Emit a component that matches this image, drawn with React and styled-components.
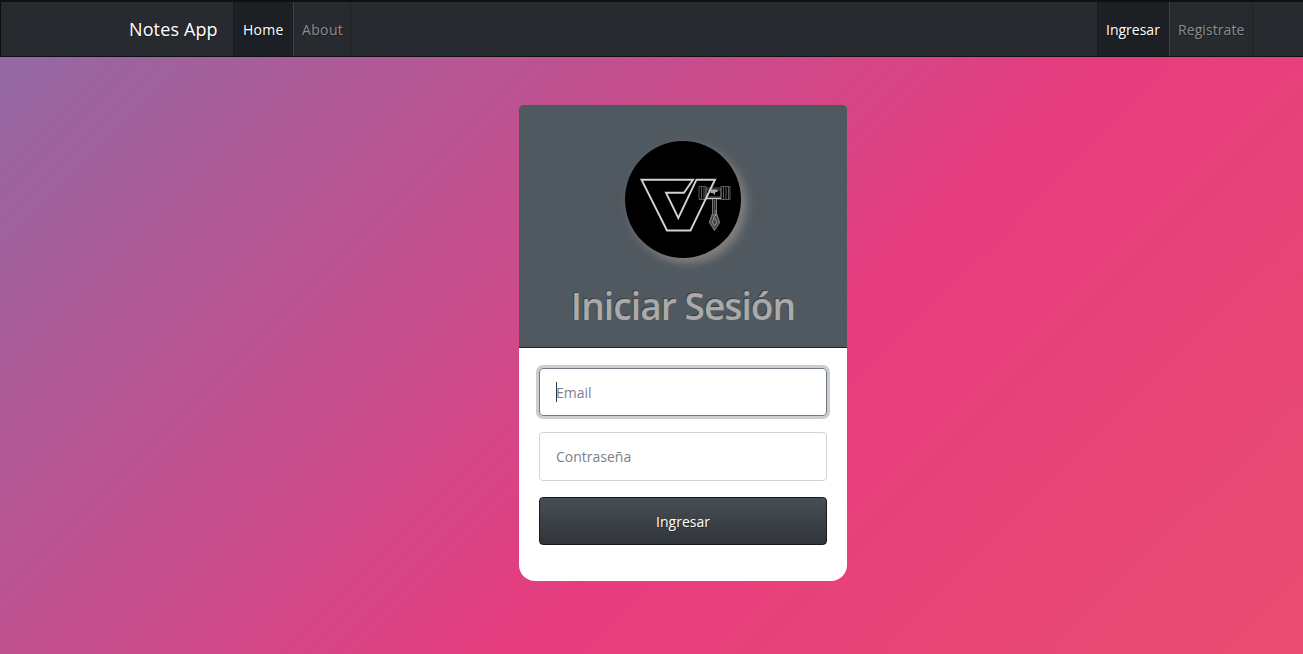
import React from "react";
import styled, { createGlobalStyle } from "styled-components";

const GlobalStyle = createGlobalStyle`
  *, *::before, *::after { box-sizing: border-box; }
  body { margin: 0; font-family: "Open Sans", "Noto Sans", sans-serif; font-size: 14px; line-height: 22px; }
`;

const Page = styled.div`
  height: 100vh;
  overflow: hidden;
  background: linear-gradient(135deg, #8f6ba5 0%, #e73c7e 59.9%, #e94e71 100%);
`;

const Navbar = styled.nav`
  display: flex;
  height: 57px;
  padding: 0 50px 0 128px;
  background: #272b2f;
  border: 1px solid #0f1012;
  border-top-width: 2px;
  border-right: 0;
  text-shadow: 1px 1px 1px rgba(0, 0, 0, 0.3);
`;

const Brand = styled.a`
  width: 104px;
  color: #fff;
  font-size: 18px;
  line-height: 54px;
  letter-spacing: 0.12px;
  white-space: nowrap;
`;

const NavGroup = styled.div`
  display: flex;
  margin-left: ${(p) => (p.$end ? "auto" : "0")};
`;

const NavLink = styled.a`
  width: ${(p) => p.$width}px;
  height: 54px;
  padding-left: 8px;
  border-left: ${(p) => (p.$active ? "1px solid #17191c" : "0")};
  border-right: 1px solid ${(p) => (p.$active ? "#3d4144" : "#1e2124")};
  background: ${(p) => (p.$active ? "#1c1f23" : "transparent")};
  color: ${(p) => (p.$active ? "#fff" : "#8b8c8d")};
  line-height: 56px;
  letter-spacing: ${(p) => p.$track || 0}px;
  text-indent: ${(p) => p.$indent || 0}px;
  white-space: nowrap;
`;

const Card = styled.main`
  width: 328px;
  height: 476px;
  margin: 48px 0 0 519px;
  overflow: hidden;
  background: #fff;
  border-radius: 3px 3px 16px 16px;
`;

const CardHeader = styled.header`
  display: flex;
  flex-direction: column;
  align-items: center;
  height: 243px;
  padding-top: 36px;
  background: #515960;
  border-bottom: 1px solid #212427;
`;

const Logo = styled.svg`
  display: block;
  width: 116px;
  height: 117px;
  border-radius: 50%;
  background: #000;
  box-shadow: 5px 5px 10px #848180;
`;

const Title = styled.h1`
  margin: 24px 0 0;
  color: #aaa;
  font-size: 37px;
  font-weight: 600;
  line-height: 48px;
  letter-spacing: -0.9px;
  white-space: nowrap;
  text-shadow: -1px -1px 0 rgba(0, 0, 0, 0.3);
`;

const Form = styled.form`
  display: flex;
  flex-direction: column;
  gap: 16px;
  padding: 20px 20px 36px;
`;

const Field = styled.div`
  position: relative;
  height: ${(p) => (p.$focused ? 48 : 49)}px;
  border: 1px solid ${(p) => (p.$focused ? "#6f7a85" : "#ced4da")};
  border-radius: 4px;
  box-shadow: ${(p) => (p.$focused ? "0 0 0 3px #cbcdcf" : "none")};
`;

const Input = styled.input`
  display: block;
  width: 100%;
  height: 100%;
  padding: 0 16px;
  border: 0;
  outline: 0;
  background: transparent;
  font: inherit;
  &::placeholder { color: #7a8288; opacity: 1; }
`;

const Caret = styled.span`
  position: absolute;
  left: 16px;
  top: 13px;
  width: 1px;
  height: 20px;
  background: #32383e;
`;

const Submit = styled.button`
  height: 48px;
  padding: 2px 0 0;
  border: 1px solid #17191b;
  border-radius: 4px;
  background: linear-gradient(#484e55, #3a3f44 60%, #313539);
  color: #fff;
  font: inherit;
  text-shadow: 1px 1px 1px rgba(0, 0, 0, 0.3);
`;

function LogoMark() {
  return (
    <Logo viewBox="0 0 116 117" fill="none">
      <g stroke="#777573" strokeWidth="0.8">
        <path d="M74 45.500h7v13h-7zM76.500 46v12M79 46v12M96 45.500h9v13h-9zM98.500 46v12M101 46v12M103.500 46v12" />
        <path d="M81 47h15v9H81zM81 49h15" />
        <path d="M87.500 58v16M91.500 58v16" strokeWidth="1" />
        <path d="M89.500 59v16" stroke="#555" strokeWidth="2" />
        <path d="M87 74l-2.500 7.500 5 7.500 5-7.500-2.500-7.500z" fill="#454443" strokeWidth="1.300" />
        <path d="M87 81l2.500-4 2.500 4-2.500 4zM91 69v5l-3 3" stroke="#aaa7a5" />
      </g>
      <path d="M85.500 48.500h7v2.500h-2l-1 3-1.500-2h-2.500z" fill="#aaa7a4" />
      <path d="M81 57.500h15" stroke="#c8c4c0" strokeWidth="1.300" />
      <path d="M16.500 38.700H68L59 51.700H41L53.300 77L71.500 38.700H90L65.500 89.500H42Z" stroke="#d5d1ce" strokeWidth="1.900" />
    </Logo>
  );
}

export default function App() {
  return (
    <Page>
      <GlobalStyle />
      <Navbar>
        <Brand>Notes App</Brand>
        <NavGroup>
          <NavLink $active $width={61} $track={0.3} $indent={1}>Home</NavLink>
          <NavLink $width={57} $track={0.35}>About</NavLink>
        </NavGroup>
        <NavGroup $end>
          <NavLink $active $width={73}>Ingresar</NavLink>
          <NavLink $width={83} $track={0.08}>Registrate</NavLink>
        </NavGroup>
      </Navbar>
      <Card>
        <CardHeader>
          <LogoMark />
          <Title>Iniciar Sesión</Title>
        </CardHeader>
        <Form>
          <Field $focused>
            <Input type="email" placeholder="Email" />
            <Caret />
          </Field>
          <Field>
            <Input type="password" placeholder="Contraseña" />
          </Field>
          <Submit type="button">Ingresar</Submit>
        </Form>
      </Card>
    </Page>
  );
}
